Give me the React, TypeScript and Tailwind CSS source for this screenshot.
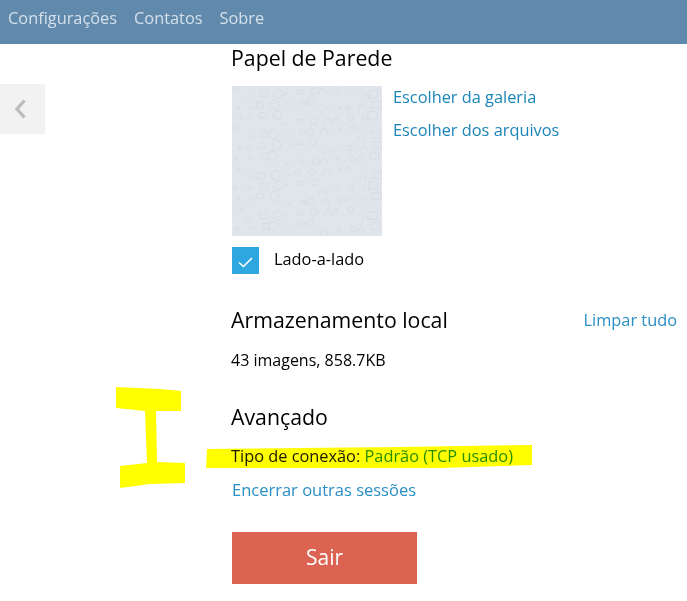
const doodles = Array.from({ length: 132 }, (_, i) => {
  const col = i % 12;
  const row = Math.floor(i / 12);
  const x = 6 + col * 12.5 + ((i * 37) % 7) - 3;
  const y = 6 + row * 13.5 + ((i * 53) % 9) - 4;
  const s = 1.5 + ((i * 29) % 4);
  return { x, y, s, kind: (i * 17) % 3 };
});

export default function App() {
  return (
    <div className="relative h-[601px] w-[687px] overflow-hidden bg-white font-['Open_Sans',sans-serif] text-black">
      <header className="flex h-[44px] items-center gap-[17px] bg-[#6089ac] pb-[8px] pl-[8px] text-[16.35px] text-[#d4e0eb]">
        <span>Configurações</span>
        <span>Contatos</span>
        <span>Sobre</span>
      </header>

      <div className="flex">
        <div className="w-[231px] shrink-0 pt-[40px]">
          <div className="flex h-[50px] w-[45px] items-center justify-center bg-[#f2f2f2] pr-[5px]">
            <svg width="14" height="20" viewBox="0 0 14 20" fill="none">
              <path d="M11.5 1.5 L4 10 L11.5 18.5" stroke="#bcbcbc" strokeWidth="3.4" />
            </svg>
          </div>
        </div>

        <main className="w-[456px] shrink-0">
          <h2 className="text-[21.3px] leading-[27px]">Papel de Parede</h2>

          <div className="mt-[15px] flex gap-[11px] pl-[1px]">
            <div className="h-[150px] w-[150px] bg-[#dfe5ea]">
              <svg width="150" height="150" viewBox="0 0 150 150" fill="none" stroke="#d6dde3" strokeWidth="1">
                {doodles.map((d, i) =>
                  d.kind === 0 ? (
                    <circle key={i} cx={d.x} cy={d.y} r={d.s} />
                  ) : d.kind === 1 ? (
                    <rect key={i} x={d.x - d.s} y={d.y - d.s} width={d.s * 2} height={d.s * 1.6} rx="1" />
                  ) : (
                    <path key={i} d={`M${d.x - d.s} ${d.y + d.s} Q${d.x} ${d.y - d.s * 2} ${d.x + d.s} ${d.y + d.s}`} />
                  ),
                )}
              </svg>
            </div>
            <div className="flex flex-col gap-[11px] text-[16.35px] leading-[22px] text-[#1c85b8]">
              <span>Escolher da galeria</span>
              <span>Escolher dos arquivos</span>
            </div>
          </div>

          <div className="mt-[11px] flex items-start gap-[15px] pl-[1px]">
            <div className="flex h-[27px] w-[27px] items-center justify-center bg-[#2ea6e0] pt-[2px]">
              <svg width="15" height="12" viewBox="0 0 15 12" fill="none">
                <path d="M1 6.5 L5.5 10.5 L14 2" stroke="white" strokeWidth="1.6" />
              </svg>
            </div>
            <span className="pt-[1px] text-[16.35px] leading-[22px]">Lado-a-lado</span>
          </div>

          <div className="mt-[32px] flex items-center justify-between pr-[10px]">
            <h2 className="text-[21.3px] leading-[27px]">Armazenamento local</h2>
            <span className="text-[16.35px] leading-[22px] text-[#2a8fc4]">Limpar tudo</span>
          </div>
          <p className="mt-[16px] text-[16px] leading-[22px]">43 imagens, 858.7KB</p>

          <h2 className="mt-[32px] text-[21.3px] leading-[27px]">Avançado</h2>
          <p className="mt-[15px] text-[16.35px] leading-[22px] text-[#1a1a00]">
            Tipo de conexão: <span className="text-[#2a8f0a]">Padrão (TCP usado)</span>
          </p>
          <p className="mt-[12px] pl-[1px] text-[16.5px] leading-[22px] text-[#2a8fc4]">Encerrar outras sessões</p>

          <button className="ml-[1px] mt-[31px] flex h-[52px] w-[185px] items-center justify-center bg-[#dc6352] text-[21px] text-white">
            Sair
          </button>
        </main>
      </div>

      <svg
        className="pointer-events-none absolute left-0 top-0 mix-blend-multiply"
        width="687"
        height="601"
        viewBox="0 0 687 601"
        fill="#ffff00"
      >
        <path d="M116 387 L160 389 L181 391 L181 411 L156 411 L157 462 L185 463 L185 483 L150 484 L120 488 L120 466 L147 463 L145 411 L116 408 Z" />
        <path d="M207 449 L300 448 L400 447 L532 445 L532 465 L440 468 L300 468 L206 468 Z" />
      </svg>
    </div>
  );
}
